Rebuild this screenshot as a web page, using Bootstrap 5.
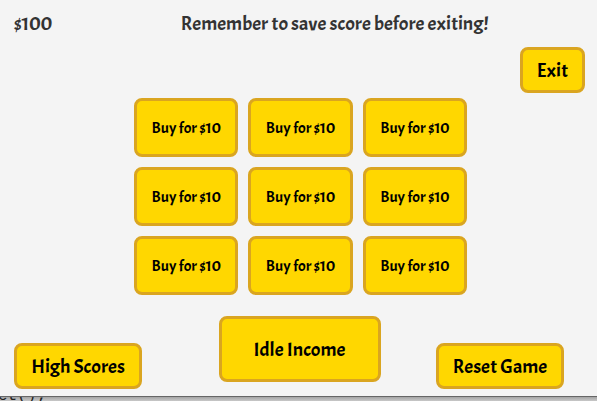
<!DOCTYPE html>
<html lang="en">
<head>
<meta charset="utf-8">
<meta name="viewport" content="width=device-width, initial-scale=1">
<title>Idle Income</title>
<link href="https://cdn.jsdelivr.net/npm/bootstrap@5.3.0/dist/css/bootstrap.min.css" rel="stylesheet">
<style>
body { background: #c8c8c8; font-family: Acme, Lato, sans-serif; }
.game { background: #f4f4f4; color: #333; border-bottom: 1px solid #666; padding: 9px 12px 7px 14px; }
.status { font-size: 20px; line-height: 30px; }
.status-note { padding-left: 32px; }
.btn-gold {
  --bs-btn-color: #000; --bs-btn-bg: #ffd700; --bs-btn-border-color: #daa520;
  --bs-btn-hover-color: #000; --bs-btn-hover-bg: #ffdf33; --bs-btn-hover-border-color: #daa520;
  --bs-btn-active-color: #000; --bs-btn-active-bg: #f0ca00; --bs-btn-active-border-color: #daa520;
  --bs-btn-border-width: 3px; --bs-btn-border-radius: 8px;
  --bs-btn-padding-x: 14px;
  --bs-btn-font-size: 20px; --bs-btn-line-height: 24px;
  padding-top: 9px; padding-bottom: 7px;
  white-space: nowrap;
}
.shop { display: grid; grid-template-columns: repeat(3, 1fr); gap: 10px; width: 335px; max-width: 100%; margin-top: 5px; padding-left: 2px; }
.btn-buy { --bs-btn-font-size: 16px; --bs-btn-padding-x: 8px; min-height: 59px; padding-top: 8px; padding-bottom: 8px; }
.actions { display: grid; grid-template-columns: 1fr auto 1fr; align-items: end; margin-top: 21px; }
.btn-side { min-width: 128px; --bs-btn-padding-x: 8px; }
.btn-reset { justify-self: end; margin-right: 21px; }
.btn-idle { min-width: 162px; min-height: 66px; margin-bottom: 7px; }
.code-peek { height: 4px; background: linear-gradient(#a4a4a4, #c8c8c8); overflow: hidden; }
.code-peek code { font: 16px/10px "Liberation Mono", monospace; color: #222; text-indent: -2px; }
</style>
</head>
<body>
<main class="game d-flex flex-column">
  <header class="status d-flex">
    <span>$100</span>
    <span class="status-note flex-fill text-center">Remember to save score before exiting!</span>
  </header>
  <div class="d-flex justify-content-end mt-2"><button type="button" class="btn btn-gold">Exit</button></div>
  <section class="shop mx-auto" aria-label="Shop">
    <button type="button" class="btn btn-gold btn-buy">Buy for $10</button>
    <button type="button" class="btn btn-gold btn-buy">Buy for $10</button>
    <button type="button" class="btn btn-gold btn-buy">Buy for $10</button>
    <button type="button" class="btn btn-gold btn-buy">Buy for $10</button>
    <button type="button" class="btn btn-gold btn-buy">Buy for $10</button>
    <button type="button" class="btn btn-gold btn-buy">Buy for $10</button>
    <button type="button" class="btn btn-gold btn-buy">Buy for $10</button>
    <button type="button" class="btn btn-gold btn-buy">Buy for $10</button>
    <button type="button" class="btn btn-gold btn-buy">Buy for $10</button>
  </section>
  <footer class="actions">
    <div><button type="button" class="btn btn-gold btn-side">High Scores</button></div>
    <button type="button" class="btn btn-gold btn-idle">Idle Income</button>
    <button type="button" class="btn btn-gold btn-side btn-reset">Reset Game</button>
  </footer>
</main>
<div class="code-peek d-flex align-items-end"><code>et();</code></div>
<script src="https://cdn.jsdelivr.net/npm/bootstrap@5.3.0/dist/js/bootstrap.bundle.min.js"></script>
</body>
</html>
